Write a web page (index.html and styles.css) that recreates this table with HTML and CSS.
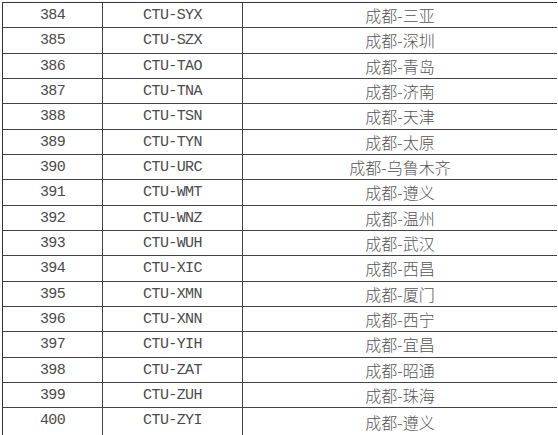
FILE: index.html
```html
<!DOCTYPE html>
<html lang="zh-CN">
<head>
<meta charset="utf-8">
<link rel="stylesheet" href="styles.css">
</head>
<body>
<div class="table">
  <div class="row"><div class="c n">384</div><div class="c code">CTU-SYX</div><div class="c city">成都-三亚</div></div>
  <div class="row"><div class="c n">385</div><div class="c code">CTU-SZX</div><div class="c city">成都-深圳</div></div>
  <div class="row"><div class="c n">386</div><div class="c code">CTU-TAO</div><div class="c city">成都-青岛</div></div>
  <div class="row"><div class="c n">387</div><div class="c code">CTU-TNA</div><div class="c city">成都-济南</div></div>
  <div class="row"><div class="c n">388</div><div class="c code">CTU-TSN</div><div class="c city">成都-天津</div></div>
  <div class="row"><div class="c n">389</div><div class="c code">CTU-TYN</div><div class="c city">成都-太原</div></div>
  <div class="row"><div class="c n">390</div><div class="c code">CTU-URC</div><div class="c city">成都-乌鲁木齐</div></div>
  <div class="row"><div class="c n">391</div><div class="c code">CTU-WMT</div><div class="c city">成都-遵义</div></div>
  <div class="row"><div class="c n">392</div><div class="c code">CTU-WNZ</div><div class="c city">成都-温州</div></div>
  <div class="row"><div class="c n">393</div><div class="c code">CTU-WUH</div><div class="c city">成都-武汉</div></div>
  <div class="row"><div class="c n">394</div><div class="c code">CTU-XIC</div><div class="c city">成都-西昌</div></div>
  <div class="row"><div class="c n">395</div><div class="c code">CTU-XMN</div><div class="c city">成都-厦门</div></div>
  <div class="row"><div class="c n">396</div><div class="c code">CTU-XNN</div><div class="c city">成都-西宁</div></div>
  <div class="row"><div class="c n">397</div><div class="c code">CTU-YIH</div><div class="c city">成都-宜昌</div></div>
  <div class="row"><div class="c n">398</div><div class="c code">CTU-ZAT</div><div class="c city">成都-昭通</div></div>
  <div class="row"><div class="c n">399</div><div class="c code">CTU-ZUH</div><div class="c city">成都-珠海</div></div>
  <div class="row last"><div class="c n">400</div><div class="c code">CTU-ZYI</div><div class="c city">成都-遵义</div></div>
</div>
</body>
</html>
```

FILE: styles.css
```css
html, body {
  margin: 0;
  padding: 0;
  background: #fff;
}
body {
  width: 558px;
  height: 435px;
  overflow: hidden;
}
.table {
  margin: 2px 0 0 2px;
  width: 554px;
  border-left: 1px solid #333;
  border-top: 1px solid #333;
}
.row {
  display: grid;
  grid-template-columns: 100px 140px 1fr;
  height: 25.33px;
  box-sizing: border-box;
  border-bottom: 1px solid #444;
}
.row.last {
  border-bottom: none;
  height: 30px;
}
.c {
  display: flex;
  align-items: center;
  justify-content: center;
  box-sizing: border-box;
}
.n, .code {
  border-right: 1px solid #444;
  font-family: "Liberation Mono", "DejaVu Sans Mono", monospace;
  font-size: 15px;
  letter-spacing: -0.6px;
  color: #4a4a4a;
}
.city {
  font-family: "Noto Sans CJK SC", sans-serif;
  font-size: 16px;
  font-weight: 300;
  color: #555;
  padding-bottom: 1px;
}
.row.last .c {
  align-items: flex-start;
  padding-top: 4px;
}
.row.last .city {
  padding-top: 2px;
}
```
